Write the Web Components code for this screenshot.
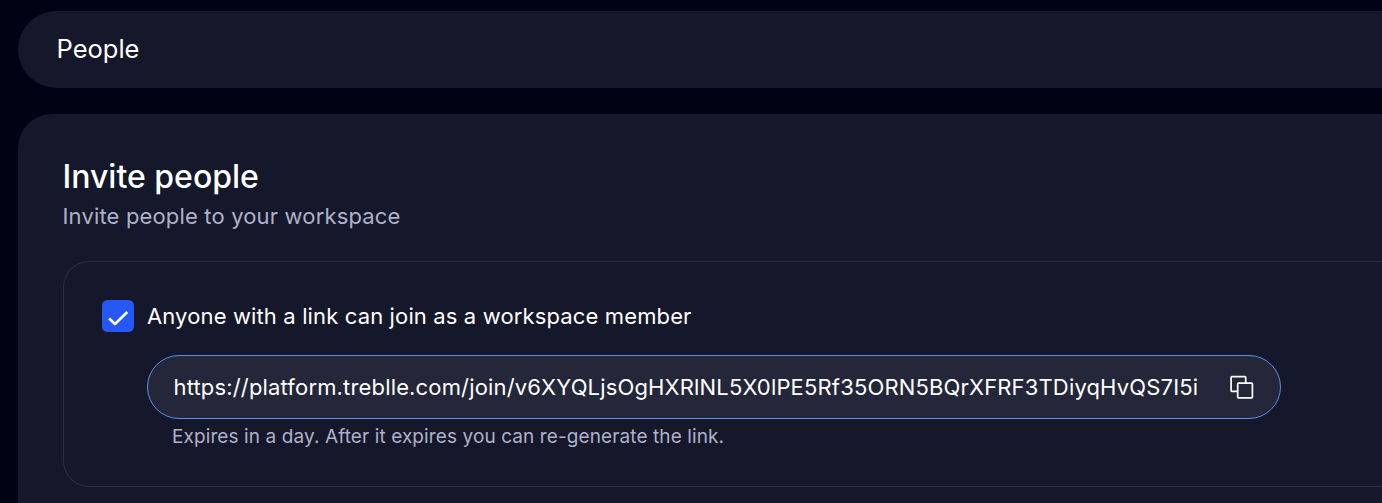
<!DOCTYPE html>
<html lang="en"><head><meta charset="utf-8"><title>People</title>
<style>html,body{margin:0;height:100%;overflow:hidden;background:#010314;font-family:Inter,sans-serif;color:#fff}</style></head>
<body><people-page></people-page>
<script>
const define=(name,html)=>customElements.define(name,class extends HTMLElement{constructor(){super();this.attachShadow({mode:'open'}).innerHTML=html}});
define('page-header',`<style>:host{display:flex;align-items:center;box-sizing:border-box;height:77px;padding:0 0 2px 38.5px;border-radius:38.5px 0 0 38.5px;background:#15172b;font-size:25.5px;line-height:32px}</style><slot></slot>`);
define('settings-card',`<style>:host{display:block;box-sizing:border-box;height:389px;margin-top:26px;padding:46px 0 0 45px;border-radius:34px 0 0 0;background:#15172b}
h2{margin:0 0 0 -.5px;font-size:32px;font-weight:500;line-height:34px}p{margin:9px 0 0 -.5px;font-size:22px;letter-spacing:.16px;line-height:26px;color:#b0b1c8}.body{margin-top:32px}</style>
<h2><slot name="title"></slot></h2><p><slot name="description"></slot></p><div class="body"><slot></slot></div>`);
define('option-panel',`<style>:host{display:block;box-sizing:border-box;height:226px;padding:38px 0 0 38px;border:1px solid #2c2e40;border-right:0;border-radius:26px 0 0 26px}</style><slot></slot>`);
define('check-option',`<style>:host{display:flex;align-items:center;gap:13px;height:32px;font-size:22px;letter-spacing:.135px}svg{display:block;flex:none}</style><svg width="32" height="32" viewBox="0 0 32 32"><rect width="32" height="32" rx="5.5" fill="#2658f6"/><path d="M7.200 18.500l5.800 5.500L25.300 12" fill="none" stroke="#fff" stroke-width="2.6" stroke-linejoin="round"/></svg><span><slot></slot></span>`);
define('link-field',`<style>:host{display:flex;align-items:center;justify-content:space-between;box-sizing:border-box;width:1134px;height:64px;margin:23px 0 0 45px;padding:0 26px 0 25.5px;border:1px solid #5b8df0;border-radius:32px;background:#24263a;font-size:22px;letter-spacing:.16px}svg{display:block}</style><span><slot></slot></span><svg width="25" height="25" viewBox="0 0 25 25" fill="none" stroke="#fff" stroke-width="1.700" stroke-linejoin="round"><rect x="8.700" y="8.200" width="14.700" height="14.700" rx=".8"/><path d="M8.700 16.300H2.900A.8.8 0 0 1 2.100 15.500V2.400A.8.8 0 0 1 2.900 1.600H15.900A.8.8 0 0 1 16.700 2.400V8.200"/></svg>`);
define('field-hint',`<style>:host{display:block;margin:6px 0 0 70px;font-size:19px;letter-spacing:.1px;line-height:24px;color:#b0b1c8}</style><slot></slot>`);
define('people-page',`<style>:host{display:block;padding:11px 0 0 18px}</style><page-header><span>People</span></page-header><settings-card><span slot="title">Invite people</span><span slot="description">Invite people to your workspace</span><option-panel><check-option>Anyone with a link can join as a workspace member</check-option><link-field>https://platform.treblle.com/join/v6XYQLjsOgHXRlNL5X0lPE5Rf35ORN5BQrXFRF3TDiyqHvQS7I5i</link-field><field-hint>Expires in a day. After it expires you can re-generate the link.</field-hint></option-panel></settings-card>`);
</script></body></html>
